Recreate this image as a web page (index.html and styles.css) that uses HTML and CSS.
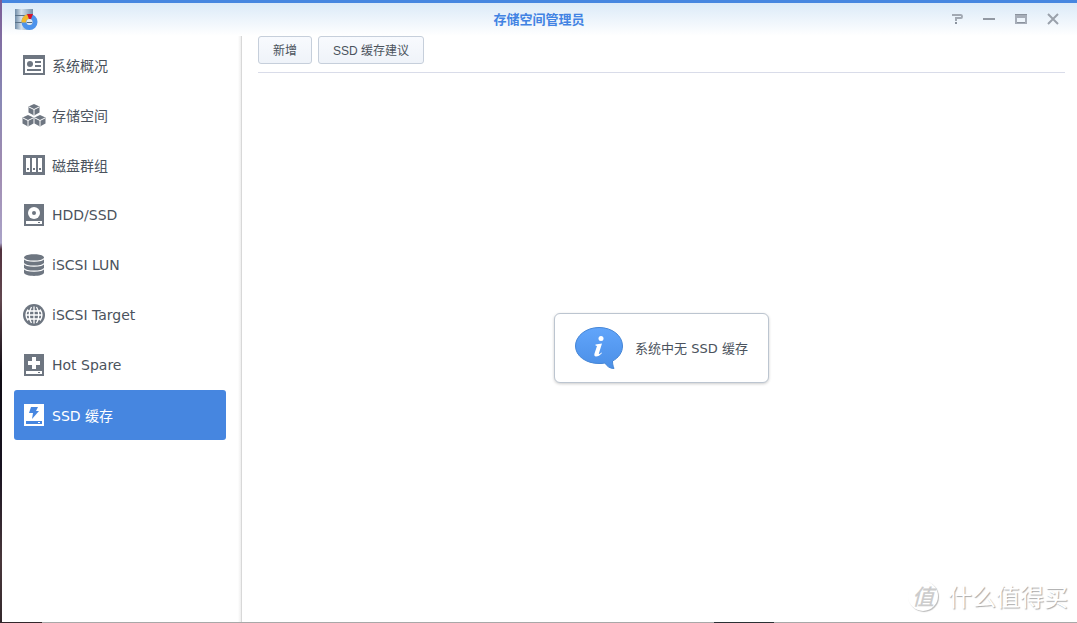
FILE: index.html
```html
<!DOCTYPE html>
<html lang="zh-CN">
<head>
<meta charset="utf-8">
<title>存储空间管理员</title>
<link rel="stylesheet" href="styles.css">
</head>
<body>
<div class="window">
  <header class="titlebar">
    <svg class="app-icon" viewBox="0 0 24 24" aria-hidden="true">
      <defs>
        <linearGradient id="steel"><stop offset="0" stop-color="#6f8ca8"/><stop offset=".35" stop-color="#d5e1ec"/><stop offset="1" stop-color="#7590aa"/></linearGradient>
      </defs>
      <path d="M0 1h18v20q-9 2-18 0z" fill="url(#steel)"/>
      <path d="M0 7.500h18M0 14.500h18" fill="none" stroke="#5b7389"/>
      <circle cx="14.500" cy="14" r="5.500" fill="none" stroke="#4c93ec" stroke-width="5"/>
      <path d="M6.500 14.500A8 8 0 0 1 12.500 6L14 11a3.500 3.500 0 0 0-3 3.500z" fill="#f2b92b"/>
      <path d="M12 6h6l-2 5h-2z" fill="#d5152b"/>
      <circle cx="14.500" cy="14" r="3" fill="#e3eaf1"/>
      <path d="M12 14.500h5" stroke="#53687c"/>
    </svg>
    <h1 class="title">存储空间管理员</h1>
    <div class="controls">
      <button class="control" type="button" aria-label="帮助"><svg viewBox="0 0 12 12"><path d="M1 2h9q1 0 1 1.500T10 5H5v3" fill="none" stroke="#a2a9b3" stroke-width="2"/><path d="M4 9h2v2H4z" fill="#8b939e"/></svg></button>
      <button class="control" type="button" aria-label="最小化"><svg viewBox="0 0 12 12"><path d="M0 6h12" stroke="#9299a3" stroke-width="2"/></svg></button>
      <button class="control" type="button" aria-label="最大化"><svg viewBox="0 0 12 12"><path d="M0 1h12v10H0zM2 5v4h8V5z" fill="#a6adb8" fill-rule="evenodd"/><path d="M0 1.500h12M2 9.500h8" stroke="#8b939e"/></svg></button>
      <button class="control" type="button" aria-label="关闭"><svg viewBox="0 0 12 12"><path d="M1 1l10 10M11 1L1 11" stroke="#9aa1ab" stroke-width="2"/></svg></button>
    </div>
  </header>
  <div class="content">
    <nav class="sidebar">
      <button class="nav-item" type="button">
        <svg class="nav-icon" viewBox="0 0 24 24"><path d="M1 2h22v20H1z"/><path class="light" d="M3 6h18v14H3z"/><circle cx="8" cy="11" r="3"/><path d="M13 8h6v2h-6zM13 12h6v2h-6zM5 16h14v2H5z"/></svg>
        系统概况</button>
      <button class="nav-item" type="button">
        <svg class="nav-icon" viewBox="0 0 24 24"><g id="cube"><path d="M12 1l5.500 2.500v6L12 12.500 6.500 9.500v-6z"/><path class="line" d="M7 4l5 2.500L17 4M12 6.500V12"/></g><use href="#cube" x="-6" y="11"/><use href="#cube" x="6" y="11"/></svg>
        存储空间</button>
      <button class="nav-item" type="button">
        <svg class="nav-icon" viewBox="0 0 24 24"><path d="M1 2h22v20H1z"/><path class="light" d="M4 5h4v14H4zM10 5h4v14h-4zM16 5h4v14h-4z"/><path d="M5 15h2v2H5zM11 15h2v2h-2zM17 15h2v2h-2z"/></svg>
        磁盘群组</button>
      <button class="nav-item" type="button">
        <svg class="nav-icon" viewBox="0 0 24 24"><path d="M2 1h20v22H2z"/><circle class="light" cx="12" cy="10" r="6"/><circle cx="12" cy="10" r="2"/><path class="light" d="M4 18h16v3H4z"/><path d="M16 19h2v1h-2z"/></svg>
        HDD/SSD</button>
      <button class="nav-item" type="button">
        <svg class="nav-icon" viewBox="0 0 24 24"><path d="M2 4.500C2 0 22 0 22 4.500v15c0 4.500-20 4.500-20 0z"/><path class="line thick" d="M2 5.500c2 3.500 18 3.500 20 0M2 10.500c2 3.500 18 3.500 20 0M2 15.500c2 3.500 18 3.500 20 0"/></svg>
        iSCSI LUN</button>
      <button class="nav-item" type="button">
        <svg class="nav-icon" viewBox="0 0 24 24"><circle cx="12" cy="12" r="11"/><path class="line thick" d="M12 3.500v17M3.500 12h17M5.500 8h13M5.500 16h13M9.500 4C6.500 8.500 6.500 15.500 9.500 20M14.500 4c3 4.500 3 11.500 0 16M6 6.500C3.500 10 3.500 14 6 17.500M18 6.500c2.500 3.500 2.500 7.500 0 11"/></svg>
        iSCSI Target</button>
      <button class="nav-item" type="button">
        <svg class="nav-icon" viewBox="0 0 24 24"><path d="M2 1h20v22H2z"/><path class="light" d="M10 4h4v4h4v4h-4v4h-4v-4H6V8h4zM4 18h16v3H4z"/><path d="M16 19h2v1h-2z"/></svg>
        Hot Spare</button>
      <button class="nav-item selected" type="button" aria-current="page">
        <svg class="nav-icon" viewBox="0 0 24 24"><path d="M2 1h20v22H2z"/><path class="light" d="M9 4h7l-2 4h3l-7 8 1-6H7zM4 18h16v3H4z"/><path d="M16 19h2v1h-2z"/></svg>
        SSD 缓存</button>
    </nav>
    <main class="main">
      <div class="toolbar">
        <button class="button" type="button">新增</button>
        <button class="button" type="button">SSD 缓存建议</button>
      </div>
      <div class="empty">
        <div class="notice" role="status">
          <svg class="notice-icon" viewBox="0 0 48 42" aria-hidden="true">
            <defs><linearGradient id="bubble" x2="0" y2="1"><stop offset="0" stop-color="#61a5fb"/><stop offset="1" stop-color="#4b8fe6"/></linearGradient></defs>
            <path d="M24 .5C37 .5 47.500 8.500 47.500 19c0 6.500-4 12-10 15 0 3 .5 5 1.500 7.500-4 0-7-2-9-5.500-2 .5-4 .5-6 .5C11 36.500 .5 29 .5 19S11 .5 24 .5z" fill="url(#bubble)" stroke="#4686d6"/>
            <circle cx="26" cy="11.500" r="2.500" fill="#fff"/>
            <path d="M20.500 17.500l6.500-1-3 9.500c-.5 1.500 0 1.500 2.500-.5l.5.500c-2 2.500-4 3.500-6 3.500-1.500 0-2-1-1.500-3l2.500-7.500-1.500-.5z" fill="#fff"/>
          </svg>
          <p class="notice-text">系统中无 SSD 缓存</p>
        </div>
      </div>
    </main>
  </div>
</div>
<div class="watermark"><span class="seal">值</span><span>什么值得买</span></div>
</body>
</html>
```
FILE: styles.css
```css
* {
  box-sizing: border-box;
}

body {
  margin: 0;
  height: 100vh;
  padding: 0 0 1px 2px;
  overflow: hidden;
  background:
    linear-gradient(90deg, #33282c 42px, #a8a8a8 42px, #a8a8a8 714px, #2b3034 714px, #2b3034 774px, #a8a8a8 774px) bottom / 100% 1px no-repeat,
    linear-gradient(#7b5c96, #8989b5 16%, #a08bb0 27%, #aaa3c8 39%, #51313e 40%, #62474f 48%, #0f0c14 60%, #171220 75%, #49373b 90%, #33282c);
  color: #4b535d;
  font-family: "DejaVu Sans", "Noto Sans CJK SC", sans-serif;
}

button {
  font-family: inherit;
  color: inherit;
  cursor: pointer;
}

.window {
  display: flex;
  flex-direction: column;
  height: 100%;
  border-top: 3px solid #4686e0;
  background: linear-gradient(#dbeaf8, #fff 33px);
}

.titlebar {
  display: grid;
  grid-template-columns: 1fr auto 1fr;
  align-items: center;
  height: 33px;
  padding: 0 16px 0 13px;
}

.app-icon {
  width: 24px;
  height: 24px;
}

.title {
  margin: 0;
  padding: 0 0 2px 2px;
  color: #4283e3;
  font-size: 13px;
  font-weight: bold;
}

.controls {
  display: flex;
  justify-content: flex-end;
  gap: 16px;
  padding-bottom: 1px;
}

.control {
  display: flex;
  align-items: center;
  justify-content: center;
  width: 16px;
  height: 16px;
  padding: 0;
  border: 0;
  background: none;
}

.control svg {
  width: 12px;
  height: 12px;
}

.content {
  display: flex;
  flex: 1;
  min-height: 0;
}

.sidebar {
  flex: none;
  width: 240px;
  padding: 4px 15px 0 12px;
  border-right: 1px solid #d8d8d8;
  background: linear-gradient(90deg, transparent, #eee) right / 3px 100% no-repeat;
}

.nav-item {
  display: flex;
  align-items: center;
  gap: 6px;
  width: 100%;
  height: 50px;
  padding: 0 8px;
  border: 0;
  border-radius: 3px;
  background: none;
  font-size: 14px;
  text-align: left;
}

.nav-icon {
  --ink: #6e7681;
  --paper: #fff;
  width: 24px;
  height: 24px;
  fill: var(--ink);
}

.nav-icon .light {
  fill: var(--paper);
}

.nav-icon .line {
  fill: none;
  stroke: var(--paper);
  stroke-width: 1;
}

.nav-icon .thick {
  stroke-width: 1.3;
}

.selected {
  background: #4686e0;
  color: #fff;
}

.selected .nav-icon {
  --ink: #fff;
  --paper: #4686e0;
}

.main {
  display: flex;
  flex: 1;
  flex-direction: column;
  padding: 0 12px 0 16px;
}

.toolbar {
  display: flex;
  gap: 6px;
  height: 37px;
  border-bottom: 1px solid #d9dce9;
}

.button {
  height: 28px;
  padding: 0 14px 2px;
  border: 1px solid #c6cfdb;
  border-radius: 3px;
  background: linear-gradient(#f8fafe, #eff3f9);
  font-family: "Liberation Sans", "Noto Sans CJK SC", sans-serif;
  font-size: 12px;
}

.empty {
  display: flex;
  flex: 1;
  align-items: center;
  justify-content: center;
}

.notice {
  display: flex;
  align-items: center;
  gap: 12px;
  height: 70px;
  padding: 0 20px;
  border: 1px solid #bcc5d0;
  border-radius: 6px;
  background: #fff;
  box-shadow: 0 1px 3px rgb(0 0 0 / 20%);
}

.notice-icon {
  width: 48px;
  height: 42px;
}

.notice-text {
  margin: 0;
  font-size: 13px;
}

.watermark {
  position: absolute;
  right: 9px;
  bottom: 9px;
  display: flex;
  align-items: center;
  gap: 10px;
  color: #fff;
  font-family: "Noto Sans CJK SC", sans-serif;
  font-size: 24px;
  line-height: 36px;
  text-shadow: 1px 1px 1px #aaa;
  pointer-events: none;
}

.seal {
  width: 30px;
  height: 30px;
  border-radius: 50%;
  box-shadow: 1px 1px 1px #bbb;
  color: #ccc;
  font-size: 22px;
  font-weight: 500;
  font-style: italic;
  line-height: 28px;
  text-align: center;
  text-shadow: none;
}
```
